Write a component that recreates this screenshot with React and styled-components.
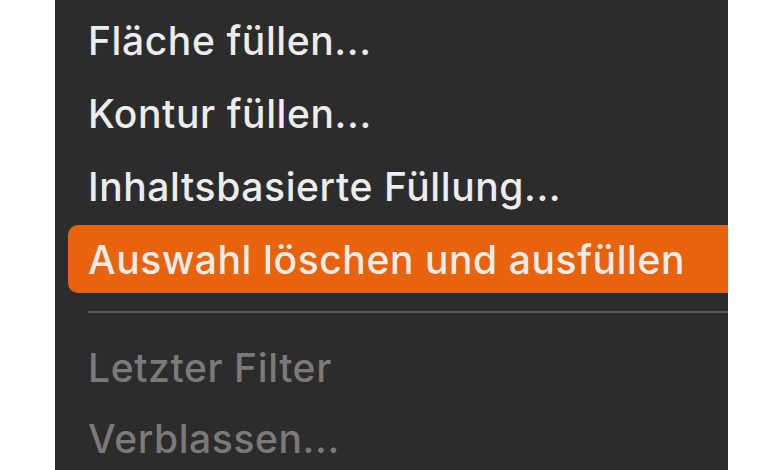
import React from 'react'
import styled, { createGlobalStyle } from 'styled-components'

const GlobalStyle = createGlobalStyle`
  html, body {
    margin: 0;
    padding: 0;
    background: #ffffff;
  }
  body {
    font-family: 'Inter', 'Liberation Sans', sans-serif;
  }
`

const Page = styled.div`
  width: 780px;
  height: 470px;
  display: flex;
  overflow: hidden;
  background: #ffffff;
`

const Menu = styled.div`
  margin-left: 55px;
  width: 673px;
  height: 470px;
  background: #2c2c2c;
  display: flex;
  flex-direction: column;
  padding-top: 6px;
  box-sizing: border-box;
`

const Item = styled.div`
  flex: 0 0 68px;
  height: 68px;
  margin: 0 0 ${p => (p.disabled ? 3 : 5)}px 13px;
  padding-left: 20px;
  display: flex;
  align-items: center;
  font-size: 39px;
  font-weight: 500;
  letter-spacing: 0.6px;
  white-space: nowrap;
  color: ${p => (p.disabled ? '#7a7a7a' : '#ededed')};
  background: ${p => (p.active ? '#e9630c' : 'transparent')};
  border-radius: 10px 0 0 10px;
`

const Separator = styled.div`
  flex: 0 0 2px;
  height: 2px;
  margin: 13px 0 20px 33px;
  background: #5b5b5b;
`

const items = [
  'Fläche füllen...',
  'Kontur füllen...',
  'Inhaltsbasierte Füllung...',
]

const App = () => {
  return (
    <Page>
      <GlobalStyle />
      <Menu>
        {items.map(label => (
          <Item key={label}>{label}</Item>
        ))}
        <Item active>Auswahl löschen und ausfüllen</Item>
        <Separator />
        <Item disabled>Letzter Filter</Item>
        <Item disabled>Verblassen...</Item>
      </Menu>
    </Page>
  )
}

export default App
